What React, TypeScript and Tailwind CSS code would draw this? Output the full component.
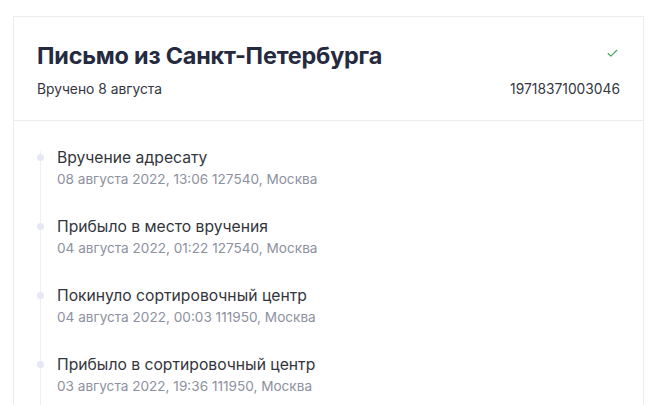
import { Check } from "lucide-react";

const events = [
	{ title: "Вручение адресату", info: "08 августа 2022, 13:06 127540, Москва" },
	{ title: "Прибыло в место вручения", info: "04 августа 2022, 01:22 127540, Москва" },
	{ title: "Покинуло сортировочный центр", info: "04 августа 2022, 00:03 111950, Москва" },
	{ title: "Прибыло в сортировочный центр", info: "03 августа 2022, 19:36 111950, Москва" },
];

const App = () => {
	return (
		<div className="h-[405px] overflow-hidden bg-white pl-[13px] pr-[6px] pt-4 font-['Inter',sans-serif]">
			<div className="h-[500px] border border-[#ececec] bg-white">
				<header className="border-b border-[#ececec] px-[23px] pt-[24px] pb-[22px]">
					<div className="flex items-start justify-between">
						<h1 className="text-[23.4px] leading-[30px] font-bold tracking-[-0.2px] text-[#252a3f]">
							Письмо из Санкт-Петербурга
						</h1>
						<Check className="mt-[6px] mr-[1px] text-[#3aa65a]" size={13} strokeWidth={2} />
					</div>
					<div className="mt-[10px] flex justify-between text-[13.8px] leading-[17px] text-[#333640]">
						<span>Вручено 8 августа</span>
						<span>19718371003046</span>
					</div>
				</header>

				<ul className="relative ml-[26px] h-full pt-[26px] pl-[17px]">
					<li className="absolute top-[30px] bottom-0 left-0 w-px bg-[#eef0f4]" aria-hidden />
					{events.map((e) => (
						<li key={e.info} className="relative mb-[27px]">
							<span className="absolute top-[7px] -left-[20px] h-[7px] w-[7px] rounded-full bg-[#e5e7f4]" />
							<div className="text-[15.7px] leading-[21px] text-[#33353d]">{e.title}</div>
							<div className="mt-[2px] text-[13.6px] leading-[19px] text-[#8d91a0]">{e.info}</div>
						</li>
					))}
				</ul>
			</div>
		</div>
	);
};

export default App;
